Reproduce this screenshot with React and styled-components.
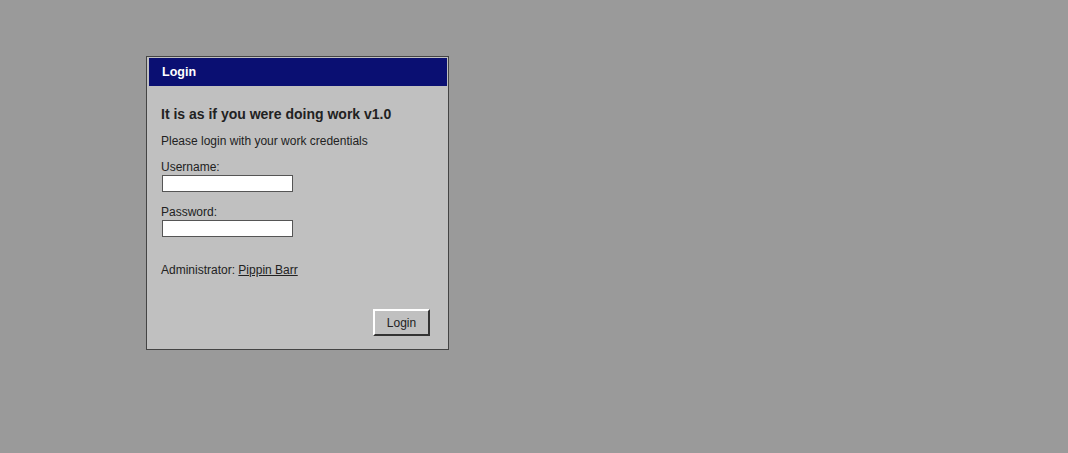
import React from "react";
import styled, { createGlobalStyle } from "styled-components";

const GlobalStyle = createGlobalStyle`
    html, body {
        margin: 0;
        padding: 0;
        background: #9a9a9a;
    }
    body {
        font-family: "Liberation Sans", Arial, sans-serif;
        color: #222;
    }
`;

const Page = styled.div`
    width: 1068px;
    height: 453px;
    padding: 56px 0 0 146px;
    box-sizing: border-box;
`;

const Window = styled.div`
    width: 303px;
    height: 294px;
    box-sizing: border-box;
    border: 1px solid #444;
    background: #c0c0c0;
    padding: 1px 1px 2px 2px;
    display: flex;
    flex-direction: column;
`;

const TitleBar = styled.div`
    height: 28px;
    background: #0a0f72;
    color: #fff;
    font-weight: bold;
    font-size: 12.5px;
    display: flex;
    align-items: center;
    padding: 0 0 1px 13px;
    box-sizing: border-box;
`;

const Body = styled.div`
    flex: 1;
    display: flex;
    flex-direction: column;
    padding: 19px 17px 11px 12px;
`;

const Heading = styled.h1`
    margin: 0;
    font-size: 14px;
    line-height: 18px;
    font-weight: bold;
`;

const Text = styled.p`
    margin: ${props => props.gap || "0"} 0 0;
    font-size: 12px;
    line-height: 16px;
`;

const Field = styled.label`
    display: flex;
    flex-direction: column;
    align-items: flex-start;
    margin-top: ${props => props.gap};
    font-size: 12px;
    line-height: 16px;
`;

const Input = styled.input`
    width: 131px;
    height: 17px;
    box-sizing: border-box;
    margin: 0 0 0 1px;
    border: 1px solid #555;
    background: #fff;
    padding: 0 3px;
    font-family: inherit;
    font-size: 12px;
    outline: none;
`;

const Link = styled.a`
    color: #222;
    text-decoration: underline;
`;

const Footer = styled.div`
    margin-top: auto;
    display: flex;
    justify-content: flex-end;
`;

const Button = styled.button`
    width: 57px;
    height: 27px;
    box-sizing: border-box;
    background: #c0c0c0;
    border: 2px solid;
    border-color: #fff #333 #333 #fff;
    font-family: inherit;
    font-size: 12px;
    color: #222;
    padding: 0;
    cursor: pointer;
`;

export default function App() {
    return (
        <>
            <GlobalStyle />
            <Page>
                <Window>
                    <TitleBar>Login</TitleBar>
                    <Body>
                        <Heading>It is as if you were doing work v1.0</Heading>
                        <Text gap="10px">Please login with your work credentials</Text>
                        <Field gap="10px">
                            Username:
                            <Input type="text" />
                        </Field>
                        <Field gap="12px">
                            Password:
                            <Input type="password" />
                        </Field>
                        <Text gap="25px">
                            Administrator: <Link href="#">Pippin Barr</Link>
                        </Text>
                        <Footer>
                            <Button>Login</Button>
                        </Footer>
                    </Body>
                </Window>
            </Page>
        </>
    );
}
